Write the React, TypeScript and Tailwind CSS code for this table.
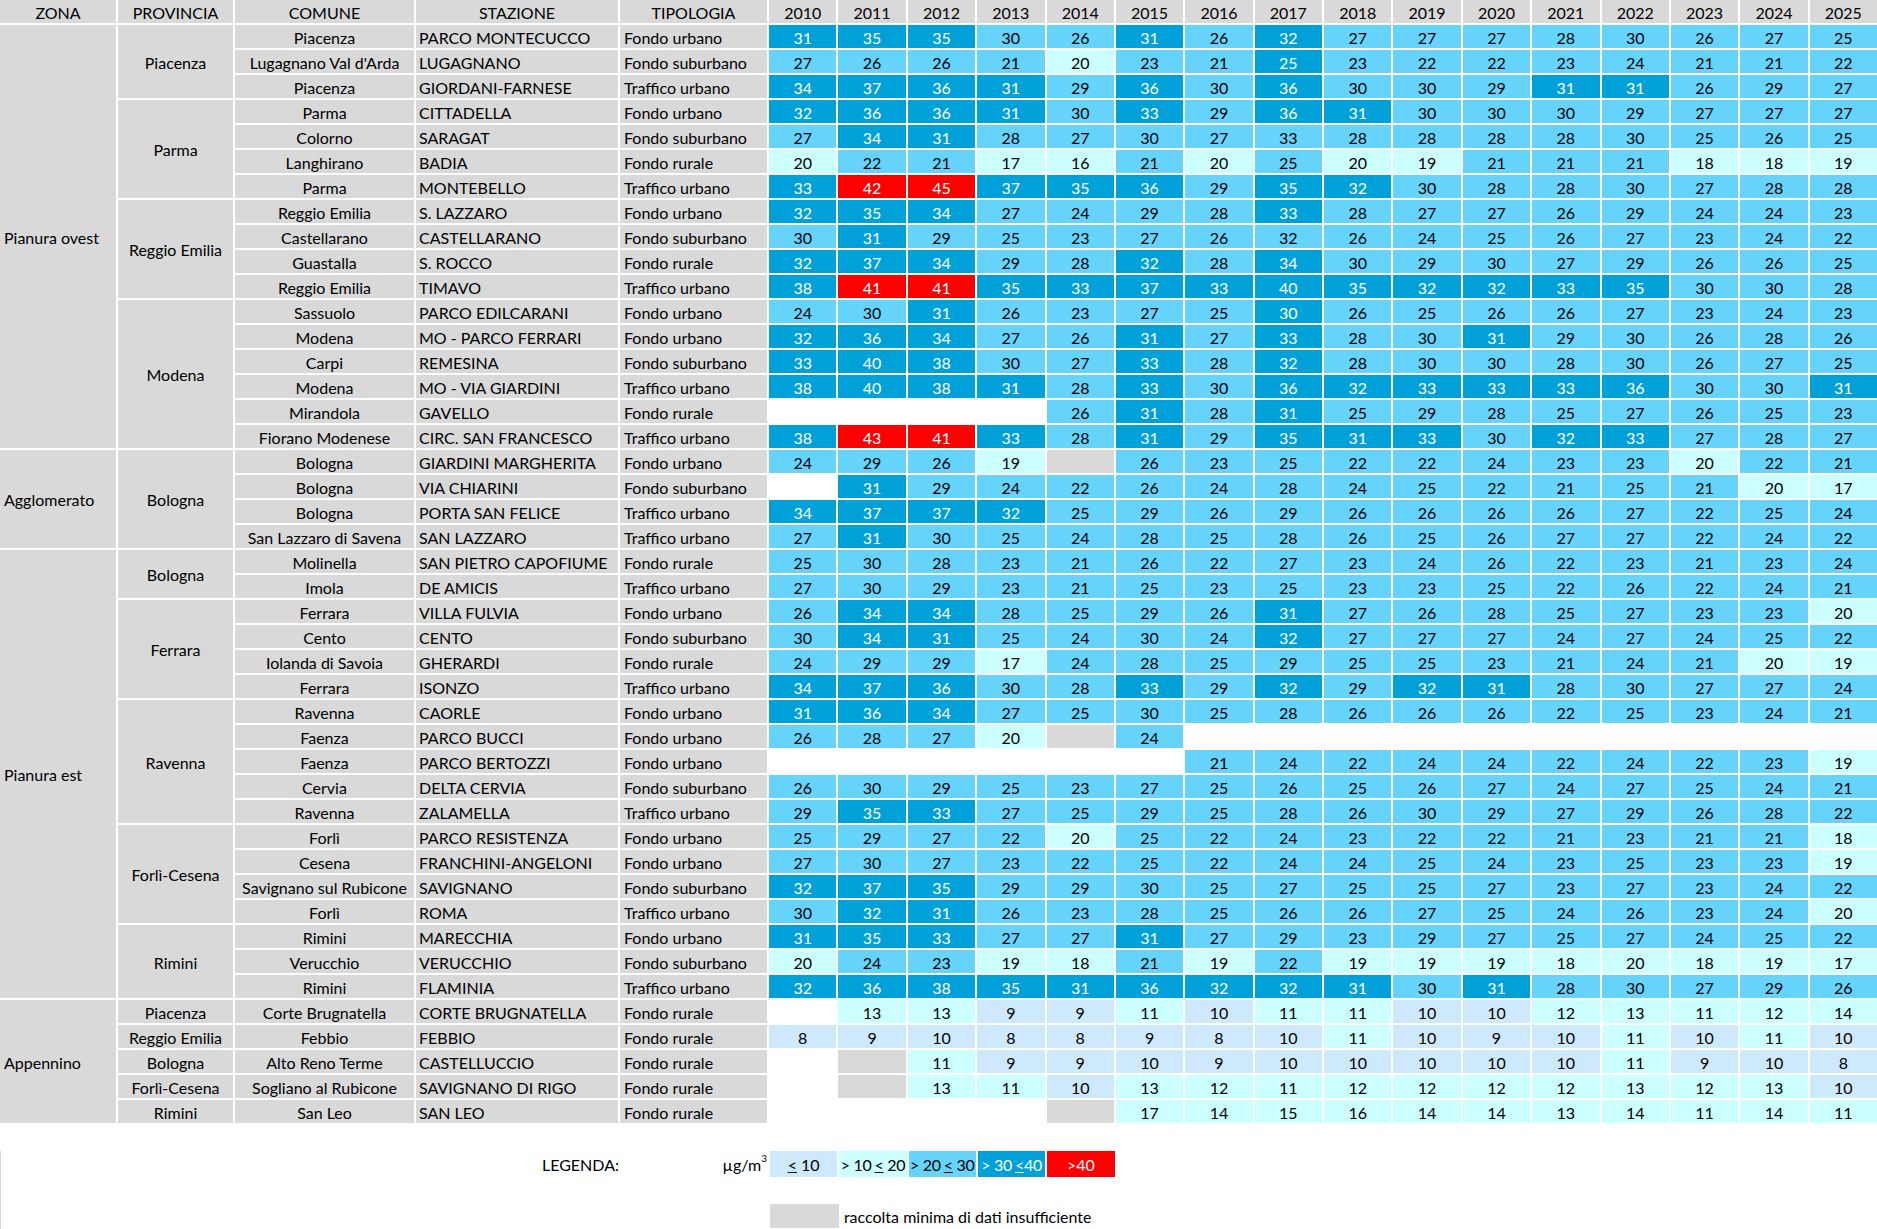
import React from 'react';

type Row = [string, string, string, string];
type Prov = { p: string; rows: Row[] };
type Zone = { zona: string; provs: Prov[] };

const YEARS = [2010, 2011, 2012, 2013, 2014, 2015, 2016, 2017, 2018, 2019, 2020, 2021, 2022, 2023, 2024, 2025];

const ZONES: Zone[] = [
  {
    zona: 'Pianura ovest',
    provs: [
      {
        p: 'Piacenza',
        rows: [
          ['Piacenza', 'PARCO MONTECUCCO', 'Fondo urbano', '31 35 35 30 26 31 26 32 27 27 27 28 30 26 27 25'],
          ["Lugagnano Val d'Arda", 'LUGAGNANO', 'Fondo suburbano', '27 26 26 21 20 23 21 25 23 22 22 23 24 21 21 22'],
          ['Piacenza', 'GIORDANI-FARNESE', 'Traffico urbano', '34 37 36 31 29 36 30 36 30 30 29 31 31 26 29 27'],
        ],
      },
      {
        p: 'Parma',
        rows: [
          ['Parma', 'CITTADELLA', 'Fondo urbano', '32 36 36 31 30 33 29 36 31 30 30 30 29 27 27 27'],
          ['Colorno', 'SARAGAT', 'Fondo suburbano', '27 34 31 28 27 30 27 33 28 28 28 28 30 25 26 25'],
          ['Langhirano', 'BADIA', 'Fondo rurale', '20 22 21 17 16 21 20 25 20 19 21 21 21 18 18 19'],
          ['Parma', 'MONTEBELLO', 'Traffico urbano', '33 42 45 37 35 36 29 35 32 30 28 28 30 27 28 28'],
        ],
      },
      {
        p: 'Reggio Emilia',
        rows: [
          ['Reggio Emilia', 'S. LAZZARO', 'Fondo urbano', '32 35 34 27 24 29 28 33 28 27 27 26 29 24 24 23'],
          ['Castellarano', 'CASTELLARANO', 'Fondo suburbano', '30 31 29 25 23 27 26 32 26 24 25 26 27 23 24 22'],
          ['Guastalla', 'S. ROCCO', 'Fondo rurale', '32 37 34 29 28 32 28 34 30 29 30 27 29 26 26 25'],
          ['Reggio Emilia', 'TIMAVO', 'Traffico urbano', '38 41 41 35 33 37 33 40 35 32 32 33 35 30 30 28'],
        ],
      },
      {
        p: 'Modena',
        rows: [
          ['Sassuolo', 'PARCO EDILCARANI', 'Fondo urbano', '24 30 31 26 23 27 25 30 26 25 26 26 27 23 24 23'],
          ['Modena', 'MO - PARCO FERRARI', 'Fondo urbano', '32 36 34 27 26 31 27 33 28 30 31 29 30 26 28 26'],
          ['Carpi', 'REMESINA', 'Fondo suburbano', '33 40 38 30 27 33 28 32 28 30 30 28 30 26 27 25'],
          ['Modena', 'MO - VIA GIARDINI', 'Traffico urbano', '38 40 38 31 28 33 30 36 32 33 33 33 36 30 30 31'],
          ['Mirandola', 'GAVELLO', 'Fondo rurale', '- - - - 26 31 28 31 25 29 28 25 27 26 25 23'],
          ['Fiorano Modenese', 'CIRC. SAN FRANCESCO', 'Traffico urbano', '38 43 41 33 28 31 29 35 31 33 30 32 33 27 28 27'],
        ],
      },
    ],
  },
  {
    zona: 'Agglomerato',
    provs: [
      {
        p: 'Bologna',
        rows: [
          ['Bologna', 'GIARDINI MARGHERITA', 'Fondo urbano', '24 29 26 19 g 26 23 25 22 22 24 23 23 20 22 21'],
          ['Bologna', 'VIA CHIARINI', 'Fondo suburbano', '- 31 29 24 22 26 24 28 24 25 22 21 25 21 20 17'],
          ['Bologna', 'PORTA SAN FELICE', 'Traffico urbano', '34 37 37 32 25 29 26 29 26 26 26 26 27 22 25 24'],
          ['San Lazzaro di Savena', 'SAN LAZZARO', 'Traffico urbano', '27 31 30 25 24 28 25 28 26 25 26 27 27 22 24 22'],
        ],
      },
    ],
  },
  {
    zona: 'Pianura est',
    provs: [
      {
        p: 'Bologna',
        rows: [
          ['Molinella', 'SAN PIETRO CAPOFIUME', 'Fondo rurale', '25 30 28 23 21 26 22 27 23 24 26 22 23 21 23 24'],
          ['Imola', 'DE AMICIS', 'Traffico urbano', '27 30 29 23 21 25 23 25 23 23 25 22 26 22 24 21'],
        ],
      },
      {
        p: 'Ferrara',
        rows: [
          ['Ferrara', 'VILLA FULVIA', 'Fondo urbano', '26 34 34 28 25 29 26 31 27 26 28 25 27 23 23 20'],
          ['Cento', 'CENTO', 'Fondo suburbano', '30 34 31 25 24 30 24 32 27 27 27 24 27 24 25 22'],
          ['Iolanda di Savoia', 'GHERARDI', 'Fondo rurale', '24 29 29 17 24 28 25 29 25 25 23 21 24 21 20 19'],
          ['Ferrara', 'ISONZO', 'Traffico urbano', '34 37 36 30 28 33 29 32 29 32 31 28 30 27 27 24'],
        ],
      },
      {
        p: 'Ravenna',
        rows: [
          ['Ravenna', 'CAORLE', 'Fondo urbano', '31 36 34 27 25 30 25 28 26 26 26 22 25 23 24 21'],
          ['Faenza', 'PARCO BUCCI', 'Fondo urbano', '26 28 27 20 g 24 - - - - - - - - - -'],
          ['Faenza', 'PARCO BERTOZZI', 'Fondo urbano', '- - - - - - 21 24 22 24 24 22 24 22 23 19'],
          ['Cervia', 'DELTA CERVIA', 'Fondo suburbano', '26 30 29 25 23 27 25 26 25 26 27 24 27 25 24 21'],
          ['Ravenna', 'ZALAMELLA', 'Traffico urbano', '29 35 33 27 25 29 25 28 26 30 29 27 29 26 28 22'],
        ],
      },
      {
        p: 'Forlì-Cesena',
        rows: [
          ['Forlì', 'PARCO RESISTENZA', 'Fondo urbano', '25 29 27 22 20 25 22 24 23 22 22 21 23 21 21 18'],
          ['Cesena', 'FRANCHINI-ANGELONI', 'Fondo urbano', '27 30 27 23 22 25 22 24 24 25 24 23 25 23 23 19'],
          ['Savignano sul Rubicone', 'SAVIGNANO', 'Fondo suburbano', '32 37 35 29 29 30 25 27 25 25 27 23 27 23 24 22'],
          ['Forlì', 'ROMA', 'Traffico urbano', '30 32 31 26 23 28 25 26 26 27 25 24 26 23 24 20'],
        ],
      },
      {
        p: 'Rimini',
        rows: [
          ['Rimini', 'MARECCHIA', 'Fondo urbano', '31 35 33 27 27 31 27 29 23 29 27 25 27 24 25 22'],
          ['Verucchio', 'VERUCCHIO', 'Fondo suburbano', '20 24 23 19 18 21 19 22 19 19 19 18 20 18 19 17'],
          ['Rimini', 'FLAMINIA', 'Traffico urbano', '32 36 38 35 31 36 32 32 31 30 31 28 30 27 29 26'],
        ],
      },
    ],
  },
  {
    zona: 'Appennino',
    provs: [
      { p: 'Piacenza', rows: [['Corte Brugnatella', 'CORTE BRUGNATELLA', 'Fondo rurale', '- 13 13 9 9 11 10 11 11 10 10 12 13 11 12 14']] },
      { p: 'Reggio Emilia', rows: [['Febbio', 'FEBBIO', 'Fondo rurale', '8 9 10 8 8 9 8 10 11 10 9 10 11 10 11 10']] },
      { p: 'Bologna', rows: [['Alto Reno Terme', 'CASTELLUCCIO', 'Fondo rurale', '- g 11 9 9 10 9 10 10 10 10 10 11 9 10 8']] },
      { p: 'Forlì-Cesena', rows: [['Sogliano al Rubicone', 'SAVIGNANO DI RIGO', 'Fondo rurale', '- g 13 11 10 13 12 11 12 12 12 12 13 12 13 10']] },
      { p: 'Rimini', rows: [['San Leo', 'SAN LEO', 'Fondo rurale', '- - - - g 17 14 15 16 14 14 13 14 11 14 11']] },
    ],
  },
];

// shading in the source doesn't always follow the rounded value
const OVERRIDES: Record<string, number> = {
  'LUGAGNANO:2017': 4,
  'SARAGAT:2017': 3,
  'CASTELLARANO:2017': 3,
  'PARCO EDILCARANI:2017': 4,
};

const LEVEL_CLASS = [
  '',
  'bg-[#cde9fb] text-black',
  'bg-[#ccffff] text-black',
  'bg-[#66d3fb] text-black',
  'bg-[#00a0d8] text-white',
  'bg-[#ff0000] text-white',
];

const level = (v: number) => {
  if (v <= 10) return 1;
  if (v <= 20) return 2;
  if (v <= 30) return 3;
  if (v <= 40) return 4;
  return 5;
};

const GRAY = 'bg-[#d9d9d9]';

function ValueCell({ raw, station, year }: { raw: string; station: string; year: number }) {
  if (raw === '-') return <div className="flex-1 min-w-0" />;
  if (raw === 'g') return <div className={`flex-1 min-w-0 ${GRAY}`} />;
  const v = Number(raw);
  const lvl = OVERRIDES[`${station}:${year}`] ?? level(v);
  return (
    <div className={`flex-1 min-w-0 flex items-center justify-center pt-[2px] ${LEVEL_CLASS[lvl]}`}>{v}</div>
  );
}

function StationRow({ row }: { row: Row }) {
  const [comune, stazione, tipologia, values] = row;
  const vals = values.split(' ');
  return (
    <div className="flex gap-[2px] h-[23px]">
      <div className={`w-[179px] shrink-0 flex items-center justify-center pt-[2px] whitespace-nowrap ${GRAY}`}>
        {comune}
      </div>
      <div className={`w-[202px] shrink-0 flex items-center pl-[3px] pt-[2px] whitespace-nowrap ${GRAY}`}>
        {stazione}
      </div>
      <div className={`w-[147px] shrink-0 flex items-center pl-1 pt-[2px] whitespace-nowrap ${GRAY}`}>
        {tipologia}
      </div>
      {YEARS.map((y, i) => (
        <ValueCell key={y} raw={vals[i]} station={stazione} year={y} />
      ))}
    </div>
  );
}

export default function App() {
  return (
    <div className="w-[1877px] h-[1229px] overflow-hidden bg-white text-black text-[16px] leading-none font-['Lato',sans-serif]">
      <div className="flex flex-col gap-[2px]">
        {/* header */}
        <div className="flex gap-[2px] h-[23px]">
          <div className={`w-[116px] shrink-0 flex items-center justify-center pt-[2px] ${GRAY}`}>ZONA</div>
          <div className={`w-[115px] shrink-0 flex items-center justify-center pt-[2px] ${GRAY}`}>PROVINCIA</div>
          <div className={`w-[179px] shrink-0 flex items-center justify-center pt-[2px] ${GRAY}`}>COMUNE</div>
          <div className={`w-[202px] shrink-0 flex items-center justify-center pt-[2px] ${GRAY}`}>STAZIONE</div>
          <div className={`w-[147px] shrink-0 flex items-center justify-center pt-[2px] ${GRAY}`}>TIPOLOGIA</div>
          {YEARS.map(y => (
            <div key={y} className={`flex-1 min-w-0 flex items-center justify-center pt-[2px] ${GRAY}`}>
              {y}
            </div>
          ))}
        </div>

        {/* zones */}
        {ZONES.map(z => (
          <div key={z.zona} className="flex gap-[2px]">
            <div className={`w-[116px] shrink-0 flex items-center pl-1 pt-[2px] whitespace-nowrap ${GRAY}`}>
              {z.zona}
            </div>
            <div className="flex-1 min-w-0 flex flex-col gap-[2px]">
              {z.provs.map(pr => (
                <div key={pr.p + pr.rows[0][1]} className="flex gap-[2px]">
                  <div className={`w-[115px] shrink-0 flex items-center justify-center pt-[2px] whitespace-nowrap ${GRAY}`}>
                    {pr.p}
                  </div>
                  <div className="flex-1 min-w-0 flex flex-col gap-[2px]">
                    {pr.rows.map(r => (
                      <StationRow key={r[1]} row={r} />
                    ))}
                  </div>
                </div>
              ))}
            </div>
          </div>
        ))}
      </div>

      {/* legend */}
      <div className="border-l border-[#d9d9d9] h-[106px]">
        <div className="flex gap-[2px] h-[26px] mt-[28px]">
          <div className="w-[116px] shrink-0" />
          <div className="w-[115px] shrink-0" />
          <div className="w-[179px] shrink-0" />
          <div className="w-[202px] shrink-0 flex items-center justify-end pt-[2px]">LEGENDA:</div>
          <div className="w-[147px] shrink-0 flex items-center justify-end pr-[1px] pt-[2px]">
            µg/m<sup className="text-[10px] -top-[7px]">3</sup>
          </div>
          <div className="flex-1 min-w-0 flex items-center justify-center pt-[2px] whitespace-nowrap bg-[#cde9fb]">
            <span className="underline">&lt;</span>&nbsp;10
          </div>
          <div className="flex-1 min-w-0 flex items-center justify-center pt-[2px] whitespace-nowrap bg-[#ccffff] tracking-[-0.3px]">
            &gt; 10 <span className="underline ml-[3px]">&lt;</span>&nbsp;20
          </div>
          <div className="flex-1 min-w-0 flex items-center justify-center pt-[2px] whitespace-nowrap bg-[#66d3fb] tracking-[-0.3px]">
            &gt; 20 <span className="underline ml-[3px]">&lt;</span>&nbsp;30
          </div>
          <div className="flex-1 min-w-0 flex items-center justify-center pt-[2px] whitespace-nowrap bg-[#00a0d8] text-white tracking-[-0.3px]">
            &gt; 30 <span className="underline ml-[3px]">&lt;</span>40
          </div>
          <div className="flex-1 min-w-0 flex items-center justify-center pt-[2px] bg-[#ff0000] text-white">&gt;40</div>
          {YEARS.slice(5).map(y => (
            <div key={y} className="flex-1 min-w-0" />
          ))}
        </div>
        <div className="flex gap-[2px] h-[24px] mt-[27px]">
          <div className="w-[767px] shrink-0" />
          <div className={`flex-1 min-w-0 ${GRAY}`} />
          <div className="flex-[15] min-w-0 flex items-center pl-[3px] pt-[2px] whitespace-nowrap">
            raccolta minima di dati insufficiente
          </div>
        </div>
      </div>
    </div>
  );
}
